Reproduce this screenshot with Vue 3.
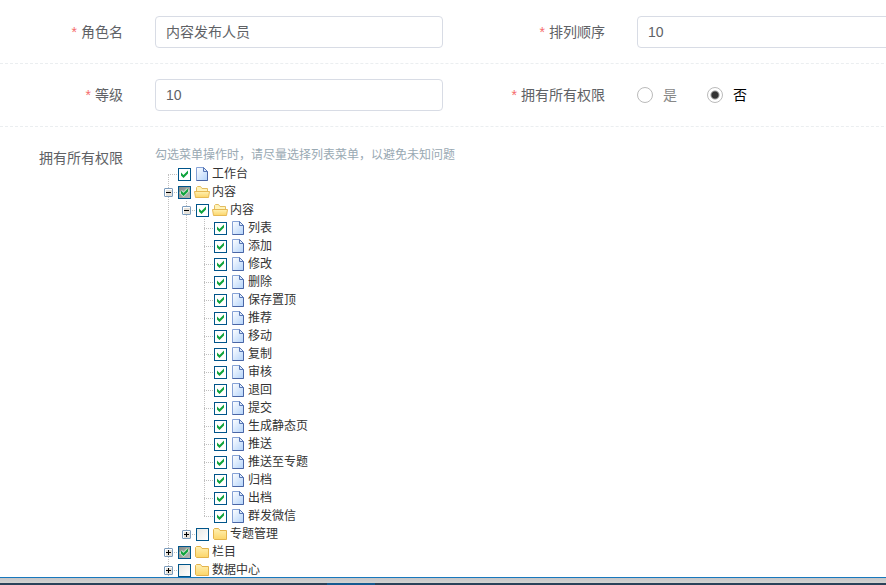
<script setup>
import { ref } from 'vue'

const roleName = ref('内容发布人员')
const level = ref('10')
const order = ref('10')
const allPermissions = ref('no')

const leaf = (label) => ({ label, checked: true })

const tree = [
  leaf('工作台'),
  {
    label: '内容', checked: true, partial: true, open: true,
    children: [
      {
        label: '内容', checked: true, open: true,
        children: [
          '列表', '添加', '修改', '删除', '保存置顶', '推荐', '移动', '复制', '审核',
          '退回', '提交', '生成静态页', '推送', '推送至专题', '归档', '出档', '群发微信',
        ].map(leaf),
      },
      { label: '专题管理', checked: false, folder: true },
    ],
  },
  { label: '栏目', checked: true, partial: true, folder: true },
  { label: '数据中心', checked: false, folder: true, more: true },
]

// Flattens the tree into rows; guides holds, per ancestor level, whether its line continues.
function flatten(nodes, guides = [], prefix = 'n') {
  return nodes.flatMap((node, i) => {
    const last = i === nodes.length - 1 && !node.more
    const id = `${prefix}-${i}`
    const row = {
      ...node,
      id,
      guides,
      first: i === 0 && guides.length === 0,
      last,
      branch: Boolean(node.children || node.folder),
    }
    return [row, ...(node.children ? flatten(node.children, [...guides, !last], id) : [])]
  })
}

const rows = ref(flatten(tree))
</script>

<template>
  <div class="page">
    <main class="content">
      <form class="form" @submit.prevent>
        <div class="row">
          <div class="item">
            <label class="label required" for="role">角色名</label>
            <input id="role" v-model="roleName" class="text" type="text">
          </div>
          <div class="item">
            <label class="label required" for="order">排列顺序</label>
            <input id="order" v-model="order" class="text" type="text">
          </div>
        </div>
        <div class="row">
          <div class="item">
            <label class="label required" for="level">等级</label>
            <input id="level" v-model="level" class="text" type="text">
          </div>
          <div class="item">
            <span id="all-label" class="label required">拥有所有权限</span>
            <div class="radios" role="radiogroup" aria-labelledby="all-label">
              <label class="radio"><input v-model="allPermissions" type="radio" name="all" value="yes"><span>是</span></label>
              <label class="radio"><input v-model="allPermissions" type="radio" name="all" value="no"><span>否</span></label>
            </div>
          </div>
        </div>
        <div class="row last-row">
          <div class="item">
            <span class="label">拥有所有权限</span>
            <div class="permissions">
              <p class="hint">勾选菜单操作时，请尽量选择列表菜单，以避免未知问题</p>
              <ul class="tree">
                <li v-for="row in rows" :key="row.id" class="node">
                  <span v-for="(line, i) in row.guides" :key="i" class="cell">
                    <svg v-if="line" viewBox="0 0 18 18"><path class="dots" d="M8.5 0V18" /></svg>
                  </span>
                  <span class="cell">
                    <svg viewBox="0 0 18 18">
                      <path v-if="!row.first" class="dots" d="M8.5 0V9" />
                      <path v-if="!row.last" class="dots" d="M8.5 10V18" />
                      <path class="dots" d="M8 9.5H18" />
                    </svg>
                    <button v-if="row.branch" class="toggle" type="button" :aria-label="row.label" :aria-expanded="Boolean(row.open)">
                      <svg viewBox="0 0 9 9">
                        <rect x=".5" y=".5" width="8" height="8" rx=".5" fill="#e6e2da" stroke="#7b9cbd" />
                        <path d="M1 1.5H8M1.5 1V8" stroke="#fff" />
                        <path d="M2 4.5H7" stroke="#000" />
                        <path v-if="!row.open" d="M4.5 2V7" stroke="#000" />
                      </svg>
                    </button>
                  </span>
                  <span class="check">
                    <input :id="row.id" v-model="row.checked" type="checkbox" :class="{ partial: row.partial }">
                    <svg v-if="row.checked" viewBox="0 0 13 13">
                      <path v-if="row.partial" d="M2.5 5.5L5.5 8.5L10.5 3.5" fill="none" stroke="#c4dfca" stroke-width="4" />
                      <path d="M3 4.5L5.5 7L10 2.5V5.5L5.5 10L3 7.5Z" fill="#0fa33c" />
                    </svg>
                  </span>
                  <svg v-if="!row.branch" class="icon" viewBox="0 0 16 16">
                    <defs>
                      <linearGradient id="paper" x1="0" y1="0" x2="1" y2="1">
                        <stop offset="0" stop-color="#fff" /><stop offset="1" stop-color="#b3d3fa" />
                      </linearGradient>
                    </defs>
                    <path d="M2.5 1.5H9.5L13.5 5.5V14.5H2.5Z" fill="url(#paper)" stroke="#86a2d6" />
                    <path d="M13.5 5.5V14.5H2.5" fill="none" stroke="#4a66a6" />
                    <path d="M9.5 1.5V5.5H13.5Z" fill="#dce9fb" stroke="#5676b6" />
                  </svg>
                  <svg v-else class="icon" viewBox="0 0 16 16">
                    <defs>
                      <linearGradient id="folder" x1="0" y1="0" x2="0" y2="1">
                        <stop offset="0" stop-color="#fff1b4" /><stop offset="1" stop-color="#fcd568" />
                      </linearGradient>
                    </defs>
                    <template v-if="row.open">
                      <path d="M2.5 12.5V3.5L3.5 2.5H6.5L8 4.5H13.5V12.5Z" fill="#fff3b8" stroke="#e3bd62" />
                      <path d="M.5 7.5H15.5L14.5 13.5H1.5Z" fill="url(#folder)" stroke="#e6b955" />
                    </template>
                    <path v-else d="M1.5 12.5V3.5L2.5 2.5H6.5L8 4.5H14.5V13.5H2.5Z" fill="url(#folder)" stroke="#e3b34c" />
                  </svg>
                  <label class="name" :for="row.id">{{ row.label }}</label>
                </li>
              </ul>
            </div>
          </div>
        </div>
      </form>
    </main>
    <footer class="taskbar"><div class="edge"></div><div class="strip"><span class="active"></span></div></footer>
  </div>
</template>

<style>
body {
  margin: 0;
  background: #fff;
}
</style>

<style scoped>
.page {
  display: flex;
  flex-direction: column;
  height: 100vh;
  overflow: hidden;
  color: #606266;
  font: 14px/32px "Liberation Sans", "Noto Sans CJK SC", sans-serif;
}
.content {
  flex: 1;
  min-height: 0;
  overflow: hidden;
}
.form {
  min-width: 964px;
  padding-top: 1px;
}
.row {
  display: grid;
  grid-template-columns: 1fr 1fr;
  padding: 15px 0;
  border-bottom: 1px dashed #ebeef0;
}
.last-row {
  border-bottom: 0;
}
.item {
  display: grid;
  grid-template-columns: 123px 1fr;
  column-gap: 32px;
  padding-right: 39px;
}
.label {
  text-align: right;
  white-space: nowrap;
}
.required::before {
  content: "*";
  margin-right: 4px;
  color: #f56c6c;
}
.text {
  box-sizing: border-box;
  width: 100%;
  height: 32px;
  padding: 0 10px;
  border: 1px solid #d8dce5;
  border-radius: 4px;
  background: #fff;
  color: #606266;
  font: inherit;
  outline: none;
}
.radios {
  display: flex;
  gap: 30px;
}
.radio {
  display: flex;
  align-items: center;
  gap: 10px;
  color: #888;
}
.radio:has(:checked) {
  color: #000;
}
.radio input {
  appearance: none;
  box-sizing: border-box;
  width: 16px;
  height: 16px;
  margin: 0;
  border: 1px solid #bbb;
  border-radius: 50%;
  background: #fff;
}
.radio input:checked {
  background: radial-gradient(circle, #333 0 3px, #fff 5px);
}
.hint {
  margin: 0;
  padding-top: 3px;
  color: #99a9b3;
  font-size: 12px;
  line-height: 20px;
  white-space: nowrap;
}
.tree {
  margin: 0;
  padding: 0 5px;
  list-style: none;
  color: #333;
  font-size: 12px;
  line-height: 18px;
}
.node {
  display: flex;
  align-items: center;
  height: 18px;
}
.cell {
  display: grid;
  flex: none;
  width: 18px;
  height: 18px;
}
.cell > * {
  grid-area: 1 / 1;
}
.dots {
  fill: none;
  stroke: #c0c0c0;
  stroke-dasharray: 1 1;
}
.toggle {
  display: flex;
  width: 9px;
  height: 9px;
  margin: 5px 4px;
  padding: 0;
  border: 0;
  background: none;
}
.check {
  display: grid;
  flex: none;
  width: 16px;
  height: 13px;
  margin-top: 1px;
}
.check > * {
  grid-area: 1 / 1;
  width: 13px;
  height: 13px;
}
.check input {
  appearance: none;
  box-sizing: border-box;
  margin: 0;
  border: 1px solid #00558a;
  background: linear-gradient(135deg, #e8e8e4, #fff);
}
.check input:checked {
  background: #fff;
}
.check input.partial:checked {
  background: linear-gradient(135deg, #858b88, #b4b8b5);
}
.check svg {
  pointer-events: none;
}
.icon {
  flex: none;
  width: 16px;
  height: 16px;
  margin-right: 2px;
}
.name {
  white-space: nowrap;
}
.taskbar {
  flex: none;
}
.edge {
  height: 5px;
  border-top: 1px solid #1878bd;
  background: linear-gradient(#c4c4c6, #d4d4d2);
}
.strip {
  display: flex;
  height: 2px;
  padding-left: 327px;
  background: #2b4259;
}
.active {
  width: 48px;
  background: #165a90;
}
</style>
